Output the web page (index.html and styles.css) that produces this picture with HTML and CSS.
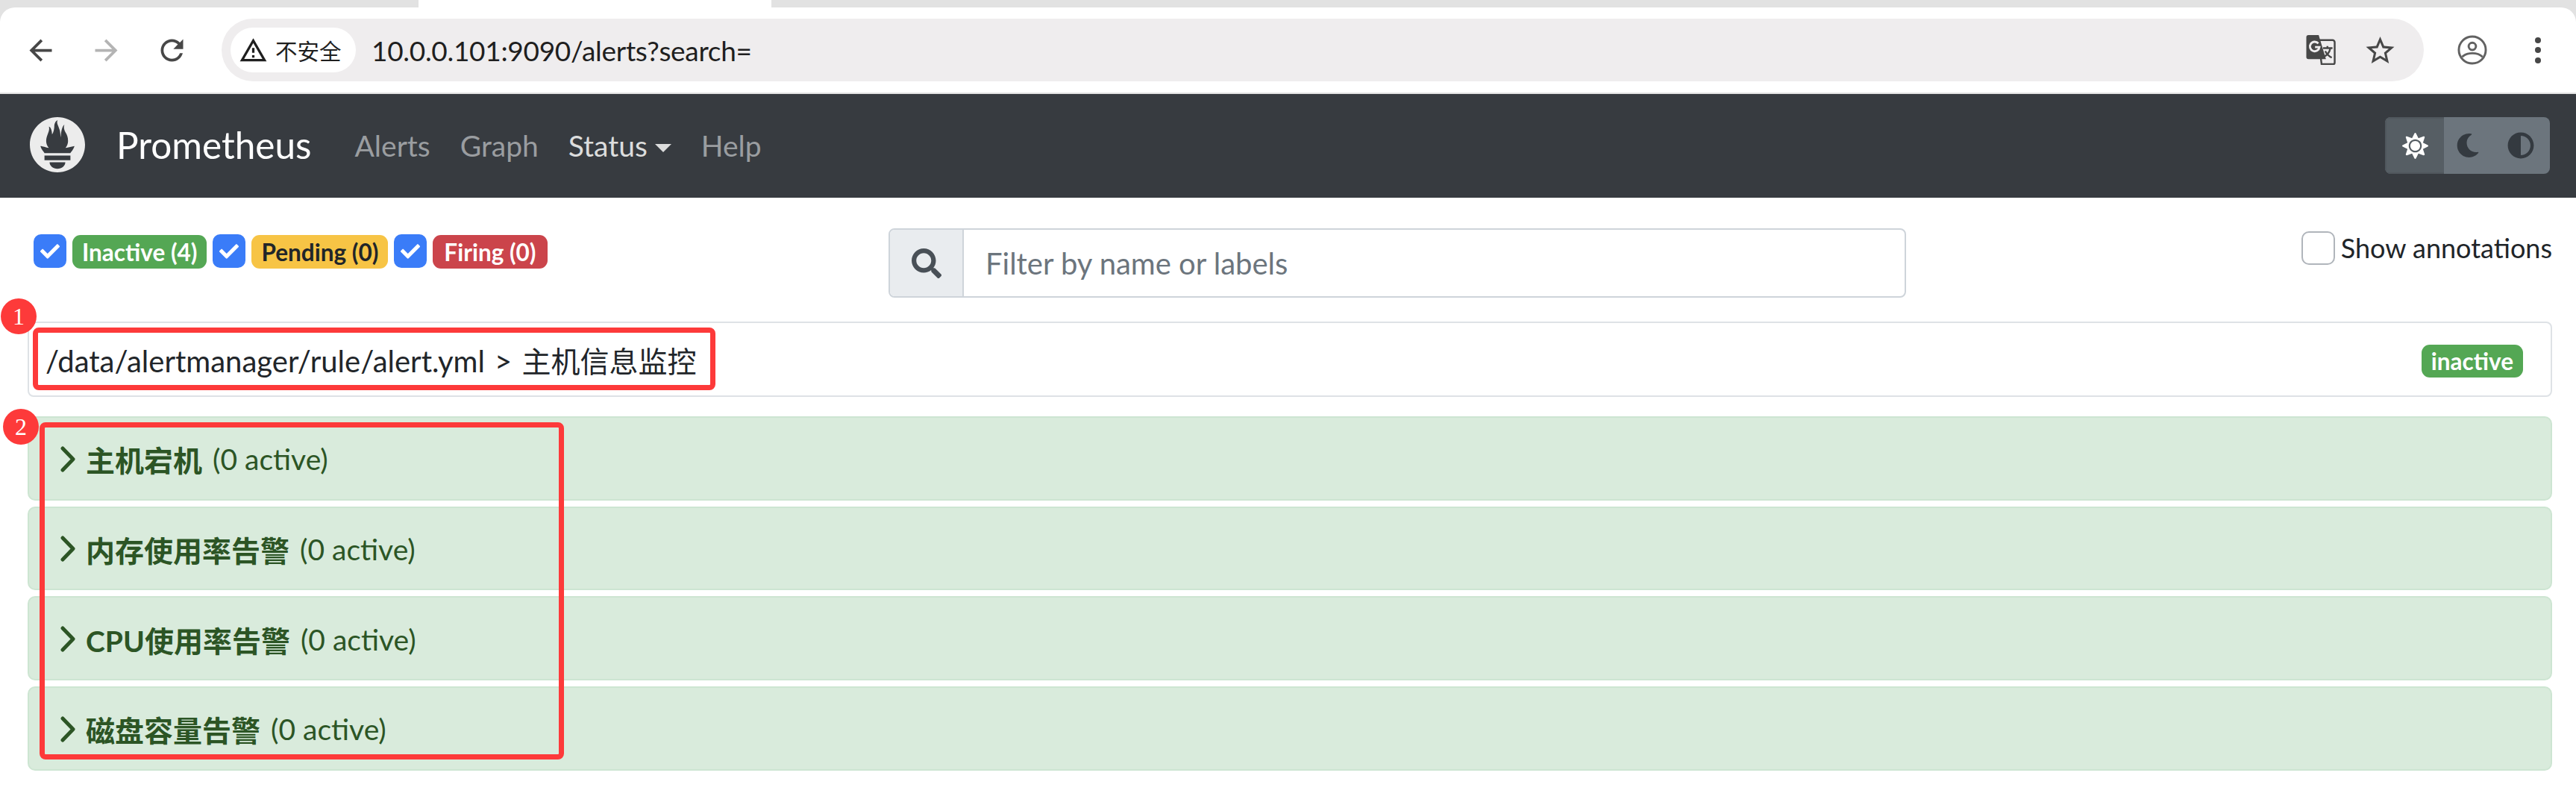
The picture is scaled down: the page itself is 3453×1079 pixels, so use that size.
FILE: index.html
```html
<!DOCTYPE html>
<html lang="zh-CN">
<head>
<meta charset="utf-8">
<title>Prometheus Time Series Collection and Processing Server</title>
<link rel="stylesheet" href="styles.css">
</head>
<body>
<div class="chrome">
  <div class="tabstrip"><div class="tab-active"></div></div>
  <div class="toolbar">
    <svg class="ic-nav" viewBox="0 0 24 24"><path d="M20 11H7.83l5.59-5.59L12 4l-8 8 8 8 1.41-1.41L7.83 13H20v-2z"/></svg>
    <svg class="ic-nav ic-disabled" viewBox="0 0 24 24"><path d="M4 11h12.17l-5.59-5.59L12 4l8 8-8 8-1.41-1.41L16.17 13H4v-2z"/></svg>
    <svg class="ic-nav" viewBox="0 0 24 24"><path d="M17.65 6.35C16.2 4.9 14.21 4 12 4c-4.42 0-7.99 3.58-7.99 8s3.57 8 7.99 8c3.73 0 6.84-2.55 7.73-6h-2.08c-.82 2.33-3.04 4-5.65 4-3.31 0-6-2.69-6-6s2.69-6 6-6c1.66 0 3.14.69 4.22 1.78L13 11h7V4l-2.35 2.35z"/></svg>
    <div class="omnibox">
      <div class="chip">
        <svg class="ic-warn" viewBox="0 0 24 24"><path fill-rule="evenodd" d="M1 21h22L12 2 1 21zm3.47-2L12 5.99 19.53 19H4.47zM13 16h-2v2h2zM13 10h-2v4h2z"/></svg>
        <span class="chip-text">不安全</span>
      </div>
      <span class="url">10.0.0.101:9090/alerts?search=</span>
      <div class="omni-actions">
        <svg class="ic-translate" viewBox="0 0 40 41">
          <path class="tr-back" d="M17 7h19a3 3 0 0 1 3 3v28a2 2 0 0 1-2 2H21z"/>
          <path class="tr-front" d="M3 0h14l10 33H3a3 3 0 0 1-3-3V3a3 3 0 0 1 3-3z"/>
          <path class="tr-g" d="M16.500 11.500a6.500 6.500 0 1 0 1.500 5h-6"/>
          <path class="tr-x" d="M23 18h13M29 15v3M33 18c-1 6-5 10-9 12M26 22c2 4 5 7 9 9"/>
        </svg>
        <svg class="ic-star" viewBox="2 2 20 19"><path fill-rule="evenodd" d="M22 9.240l-7.190-.62L12 2 9.190 8.630 2 9.240l5.460 4.730L5.820 21 12 17.270 18.180 21l-1.630-7.030L22 9.240zM12 15.400l-3.760 2.270 1-4.280-3.320-2.880 4.380-.38L12 6.100l1.710 4.040 4.380.38-3.320 2.880 1 4.280L12 15.400z"/></svg>
      </div>
    </div>
    <svg class="ic-profile" viewBox="0 0 40 41">
      <circle cx="20" cy="20.500" r="18.500"/>
      <circle cx="20" cy="15.500" r="5"/>
      <path d="M6 30c4-4 9-5 14-5s10 1 14 5"/>
    </svg>
    <div class="dots"><i></i><i></i><i></i></div>
  </div>
</div>

<nav class="navbar">
  <svg class="logo" viewBox="0 0 24 24"><path fill-rule="evenodd" d="M12 0C5.373 0 0 5.372 0 12c0 6.627 5.373 12 12 12s12-5.373 12-12c0-6.628-5.373-12-12-12zm0 22.460c-1.885 0-3.414-1.260-3.414-2.814h6.828c0 1.553-1.528 2.813-3.414 2.813zm5.640-3.745H6.360v-2.046h11.280v2.046zm-.04-3.098H6.391c-.037-.043-.075-.086-.111-.13-1.155-1.401-1.427-2.133-1.690-2.879-.005-.025 1.400.287 2.395.511 0 0 .513.119 1.262.255-.72-.843-1.147-1.915-1.147-3.010 0-2.406 1.845-4.508 1.180-6.207.648.053 1.340 1.367 1.387 3.422.689-.951.977-2.690.977-3.755 0-1.103.727-2.385 1.454-2.429-.648 1.068.168 1.984.894 4.256.272.854.237 2.290.447 3.201.07-1.892.395-4.652 1.595-5.605-.529 1.200.079 2.702.494 3.424.671 1.164 1.078 2.047 1.078 3.716 0 1.119-.413 2.173-1.110 2.997.792-.149 1.336-.283 1.336-.283l2.573-.502s-.374 1.538-1.810 3.019z"/></svg>
  <a class="brand">Prometheus</a>
  <div class="nav-links">
    <a class="nav-link">Alerts</a>
    <a class="nav-link">Graph</a>
    <a class="nav-link nav-open">Status<span class="caret"></span></a>
    <a class="nav-link">Help</a>
  </div>
  <div class="theme-group">
    <div class="theme-btn theme-on">
      <svg class="ic-sun" viewBox="0 0 512 512"><path d="M256 160c-52.900 0-96 43.100-96 96s43.100 96 96 96 96-43.100 96-96-43.100-96-96-96zm246.400 80.500l-94.700-47.300 33.500-100.400c4.500-13.600-8.400-26.500-21.900-21.900l-100.400 33.500-47.400-94.800c-6.400-12.800-24.600-12.800-31 0l-47.300 94.700L92.700 70.800c-13.600-4.500-26.500 8.400-21.900 21.900l33.500 100.400-94.700 47.400c-12.800 6.400-12.800 24.600 0 31l94.700 47.300-33.500 100.500c-4.500 13.600 8.400 26.500 21.900 21.900l100.400-33.500 47.300 94.700c6.400 12.800 24.600 12.800 31 0l47.300-94.700 100.400 33.500c13.600 4.500 26.500-8.400 21.900-21.900l-33.500-100.400 94.700-47.300c13-6.500 13-24.700.2-31.100zm-155.900 106c-49.900 49.900-131.100 49.900-181 0-49.900-49.900-49.900-131.100 0-181 49.900-49.900 131.100-49.900 181 0 49.900 49.900 49.900 131.100 0 181z"/></svg>
    </div>
    <div class="theme-btn theme-moon">
      <svg class="ic-moon" viewBox="0 0 512 512"><path d="M283.211 512c78.962 0 151.079-35.925 198.857-94.792 7.068-8.708-.639-21.430-11.562-19.350-124.203 23.654-238.262-71.576-238.262-196.954 0-72.222 38.662-138.635 101.498-174.394 9.686-5.512 7.250-20.197-3.756-22.230A258.156 258.156 0 0 0 283.211 0c-141.309 0-256 114.511-256 256 0 141.309 114.511 256 256 256z"/></svg>
    </div>
    <div class="theme-btn theme-auto">
      <svg class="ic-auto" viewBox="0 0 512 512"><path fill-rule="evenodd" d="M8 256c0 136.966 111.033 248 248 248s248-111.034 248-248S392.966 8 256 8 8 119.033 8 256zm248 184V72c101.705 0 184 82.311 184 184 0 101.705-82.311 184-184 184z"/></svg>
    </div>
  </div>
</nav>

<main class="page">
  <div class="top-row">
    <div class="filters">
      <span class="cb"><svg viewBox="0 0 512 512"><path d="M173.898 439.404l-166.400-166.400c-9.997-9.997-9.997-26.206 0-36.204l36.203-36.204c9.997-9.998 26.207-9.998 36.204 0L192 312.690 432.095 72.596c9.997-9.997 26.207-9.997 36.204 0l36.203 36.204c9.997 9.997 9.997 26.206 0 36.204l-294.400 294.401c-9.998 9.997-26.207 9.997-36.204-.001z"/></svg></span>
      <span class="badge b-inactive">Inactive (4)</span>
      <span class="cb"><svg viewBox="0 0 512 512"><path d="M173.898 439.404l-166.400-166.400c-9.997-9.997-9.997-26.206 0-36.204l36.203-36.204c9.997-9.998 26.207-9.998 36.204 0L192 312.690 432.095 72.596c9.997-9.997 26.207-9.997 36.204 0l36.203 36.204c9.997 9.997 9.997 26.206 0 36.204l-294.400 294.401c-9.998 9.997-26.207 9.997-36.204-.001z"/></svg></span>
      <span class="badge b-pending">Pending (0)</span>
      <span class="cb"><svg viewBox="0 0 512 512"><path d="M173.898 439.404l-166.400-166.400c-9.997-9.997-9.997-26.206 0-36.204l36.203-36.204c9.997-9.998 26.207-9.998 36.204 0L192 312.690 432.095 72.596c9.997-9.997 26.207-9.997 36.204 0l36.203 36.204c9.997 9.997 9.997 26.206 0 36.204l-294.400 294.401c-9.998 9.997-26.207 9.997-36.204-.001z"/></svg></span>
      <span class="badge b-firing">Firing (0)</span>
    </div>
    <div class="search">
      <div class="search-addon"><svg viewBox="0 0 512 512"><path fill-rule="evenodd" d="M505 442.700L405.300 343c-4.500-4.500-10.600-7-17-7H372c27.600-35.300 44-79.700 44-128C416 93.100 322.900 0 208 0S0 93.100 0 208s93.100 208 208 208c48.300 0 92.700-16.400 128-44v16.300c0 6.400 2.500 12.500 7 17l99.700 99.700c9.400 9.400 24.600 9.400 33.900 0l28.300-28.300c9.400-9.400 9.400-24.600.1-34zM208 336c-70.700 0-128-57.200-128-128 0-70.700 57.200-128 128-128 70.700 0 128 57.200 128 128 0 70.700-57.200 128-128 128z"/></svg></div>
      <div class="search-input">Filter by name or labels</div>
    </div>
    <label class="annot"><span class="annot-box"></span>Show annotations</label>
  </div>

  <section class="file-panel">
    <span class="file-name">/data/alertmanager/rule/alert.yml &gt; <span class="cjk cjk-plain">主机信息监控</span></span>
    <span class="badge badge-sm b-inactive">inactive</span>
  </section>

  <section class="rules">
    <div class="rule">
      <svg class="chev" viewBox="0 0 20 35"><path d="M3 3 17 17.500 3 32"/></svg>
      <strong class="rule-name"><span class="cjk">主机宕机</span></strong>
      <span class="rule-count">(0 active)</span>
    </div>
    <div class="rule">
      <svg class="chev" viewBox="0 0 20 35"><path d="M3 3 17 17.500 3 32"/></svg>
      <strong class="rule-name"><span class="cjk">内存使用率告警</span></strong>
      <span class="rule-count">(0 active)</span>
    </div>
    <div class="rule">
      <svg class="chev" viewBox="0 0 20 35"><path d="M3 3 17 17.500 3 32"/></svg>
      <strong class="rule-name">CPU<span class="cjk">使用率告警</span></strong>
      <span class="rule-count">(0 active)</span>
    </div>
    <div class="rule">
      <svg class="chev" viewBox="0 0 20 35"><path d="M3 3 17 17.500 3 32"/></svg>
      <strong class="rule-name"><span class="cjk">磁盘容量告警</span></strong>
      <span class="rule-count">(0 active)</span>
    </div>
  </section>
</main>

<div class="mark-box mark-box-1"></div>
<div class="mark-box mark-box-2"></div>
<div class="mark-dot mark-dot-1">1</div>
<div class="mark-dot mark-dot-2">2</div>
</body>
</html>
```
FILE: styles.css
```css
* { box-sizing: border-box; }
html, body { margin: 0; padding: 0; }
body {
  width: 3453px;
  height: 1079px;
  overflow: hidden;
  position: relative;
  background: #fff;
  color: #212529;
  font-family: "Lato", "Noto Sans CJK SC", sans-serif;
  font-size: 39px;
}
.cjk { font-family: "Noto Sans CJK SC", sans-serif; font-size: 39px; }

/* browser chrome */
.chrome { background: #e2e2e2; }
.tabstrip { height: 10px; position: relative; }
.tab-active { position: absolute; left: 561px; width: 473px; top: 0; height: 10px; background: #fff; }
.toolbar {
  height: 116px;
  background: #fff;
  border-radius: 20px 20px 0 0;
  border-bottom: 2px solid #e2e2e2;
  display: flex;
  align-items: center;
  padding-left: 32px;
  gap: 43px;
}
.ic-nav { width: 45px; height: 45px; fill: #474747; flex: none; }
.ic-disabled { fill: #b4b4b4; }
.omnibox {
  width: 2952px;
  height: 84px;
  margin-left: 1px;
  border-radius: 42px;
  background: #efedee;
  display: flex;
  align-items: center;
  padding: 0 39px 0 12px;
  flex: none;
}
.chip {
  width: 168px;
  height: 60px;
  border-radius: 30px;
  background: #fff;
  display: flex;
  align-items: center;
  padding-left: 10.500px;
  gap: 10.500px;
  flex: none;
}
.ic-warn { width: 39px; height: 39px; fill: #1f1f1f; flex: none; }
.chip-text { font-family: "Noto Sans CJK SC", sans-serif; font-size: 29.500px; color: #1f1f1f; }
.url { margin-left: 21px; font-size: 37px; letter-spacing: -0.3px; color: #1f1f1f; }
.omni-actions { margin-left: auto; display: flex; align-items: center; gap: 40px; }
.ic-translate { width: 40px; height: 40px; }
.tr-back { fill: #efedee; stroke: #474747; stroke-width: 2.500; }
.tr-front { fill: #474747; }
.tr-g { fill: none; stroke: #efedee; stroke-width: 3; }
.tr-x { fill: none; stroke: #474747; stroke-width: 2.500; }
.ic-star { width: 39px; height: 36px; fill: #474747; }
.ic-profile { width: 40px; height: 40px; margin-left: 2px; fill: none; stroke: #626262; stroke-width: 3; flex: none; }
.dots { margin-left: 21px; display: flex; flex-direction: column; gap: 5.500px; }
.dots i { display: block; width: 8px; height: 8px; border-radius: 50%; background: #474747; }

/* navbar */
.navbar {
  height: 139px;
  background: #373b40;
  display: flex;
  align-items: center;
  padding: 0 35px 3px 40px;
}
.logo { width: 74px; height: 74px; fill: #ececec; flex: none; }
.brand { margin-left: 42px; font-size: 49.500px; color: #fff; }
.nav-links { margin-left: 58px; display: flex; gap: 40px; margin-top: 2px; }
.nav-link { font-size: 39px; color: #9a9da0; }
.nav-open { color: #dcdddd; }
.caret {
  display: inline-block;
  margin-left: 10px;
  vertical-align: 6px;
  border-top: 11px solid #dcdddd;
  border-left: 11px solid transparent;
  border-right: 11px solid transparent;
}
.theme-group {
  margin: 2px 0 0 auto;
  width: 221px;
  height: 76px;
  display: flex;
  border-radius: 8px;
  overflow: hidden;
  background: #6c757d;
}
.theme-btn { display: flex; align-items: center; justify-content: center; }
.theme-on { width: 79px; background: #565e64; border: 2px solid #50575d; border-right: 0; }
.theme-moon { width: 64px; }
.theme-auto { width: 78px; }
.ic-sun { width: 35px; height: 35px; fill: #fff; }
.ic-moon { width: 32px; height: 32px; fill: #343a40; }
.ic-auto { width: 36px; height: 36px; fill: #343a40; }

/* page */
.page { padding: 0 32px 0 37px; }
.top-row {
  display: grid;
  grid-template-columns: 1154px 1364px 1fr;
  padding-top: 41px;
}
.filters { display: flex; align-items: flex-start; padding: 8px 0 0 8px; }
.cb {
  width: 44px;
  height: 45px;
  border-radius: 10px;
  background: #3a7cf8;
  display: flex;
  align-items: center;
  justify-content: center;
  flex: none;
}
.cb svg { width: 26px; height: 26px; fill: #fff; }
.badge {
  display: inline-flex;
  align-items: center;
  height: 45px;
  padding: 0 13px;
  margin: 1px 8px 0 8px;
  border-radius: 11px;
  font-size: 31.500px;
  font-weight: 700;
  color: #fff;
  white-space: nowrap;
}
.b-inactive { background: #54a754; }
.b-pending { background: #f7c445; color: #212529; }
.b-firing { background: #cb444b; padding: 0 15px; }
.search {
  height: 93px;
  display: flex;
  border: 2px solid #ced4da;
  border-radius: 8px;
  overflow: hidden;
}
.search-addon {
  width: 99px;
  background: #e9ecef;
  border-right: 2px solid #ced4da;
  display: flex;
  align-items: center;
  justify-content: center;
}
.search-addon svg { width: 40px; height: 40px; fill: #495057; }
.search-input {
  flex: 1;
  display: flex;
  align-items: center;
  padding-left: 29px;
  color: #6c757d;
  font-size: 40px;
}
.annot { display: flex; align-items: flex-start; justify-content: flex-end; padding-top: 4px; white-space: nowrap; font-size: 36px; }
.annot-box {
  width: 45px;
  height: 45px;
  border: 2px solid #b0b5bb;
  border-radius: 10px;
  margin-right: 8px;
  flex: none;
}
.file-panel {
  margin-top: 32px;
  height: 101px;
  border: 2px solid #dee2e6;
  border-radius: 8px;
  display: flex;
  align-items: center;
  justify-content: space-between;
  padding: 0 37px 0 22px;
}
.file-name { font-size: 40px; word-spacing: 3px; }
.badge-sm { margin: 5px 0 0; height: 44px; }
.rules { margin-top: 26px; display: flex; flex-direction: column; gap: 8px; }
.rule {
  height: 112.670px;
  background: #d9ebdc;
  border: 2px solid #cde5d2;
  border-radius: 10px;
  display: flex;
  align-items: center;
  padding: 2px 0 0 42px;
  color: #2c5525;
}
.chev { width: 20px; height: 35px; fill: none; stroke: #2c5525; stroke-width: 5; stroke-linecap: round; stroke-linejoin: round; flex: none; margin-right: 14px; }
.rule-name { font-weight: 700; font-size: 39px; }
.rule-count { margin-left: 14px; }

/* annotations over the screenshot */
.mark-box { position: absolute; border: 7px solid #fd3a3a; border-radius: 8px; }
.mark-box-1 { left: 44px; top: 439px; width: 915px; height: 84px; }
.mark-box-2 { left: 53px; top: 566px; width: 703px; height: 452px; }
.mark-dot {
  position: absolute;
  width: 48px;
  height: 48px;
  border-radius: 50%;
  background: #fd3a3a;
  color: #fff;
  font-family: "Liberation Serif", serif;
  font-size: 32px;
  display: flex;
  align-items: center;
  justify-content: center;
}
.mark-dot-1 { left: 1px; top: 400px; }
.mark-dot-2 { left: 4px; top: 548px; }
```
